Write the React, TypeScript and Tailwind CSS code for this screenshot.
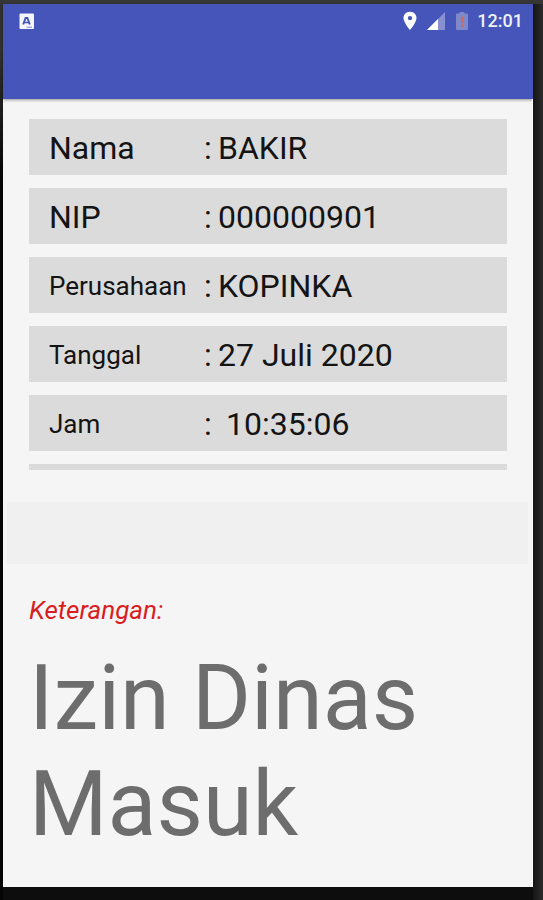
type Row = {
  label: string;
  value: string;
  small?: boolean;
  indent?: boolean;
};

const ROWS: Row[] = [
  { label: "Nama", value: "BAKIR" },
  { label: "NIP", value: "000000901" },
  { label: "Perusahaan", value: "KOPINKA", small: true },
  { label: "Tanggal", value: "27 Juli 2020", small: true },
  { label: "Jam", value: "10:35:06", small: true, indent: true },
];

function AppBadgeIcon() {
  return (
    <svg width="16" height="17" viewBox="0 0 16 17" aria-hidden="true">
      <rect x="0.5" y="0.5" width="14.5" height="15.5" rx="1" fill="#f6f7fc" />
      <path d="M4.2 11.5 6.600 5h1.8l2.4 6.500" fill="none" stroke="#4355b9" strokeWidth="1.9" />
      <path d="M5.300 9.500h4.600" stroke="#4355b9" strokeWidth="1.5" />
      <path d="M7.500 14.200h5.500" stroke="#8f9ad6" strokeWidth="1.2" />
    </svg>
  );
}

function LocationIcon() {
  return (
    <svg width="14" height="20" viewBox="0 0 14 20" aria-hidden="true">
      <path
        fillRule="evenodd"
        fill="#ffffff"
        d="M7 .8C3.300.8.500 3.600.500 7c0 4.600 6.500 12 6.500 12S13.500 11.600 13.500 7C13.500 3.600 10.700.8 7 .8Zm0 4.100a2.200 2.200 0 1 1 0 4.400 2.200 2.200 0 0 1 0-4.400Z"
      />
    </svg>
  );
}

function SignalIcon() {
  return (
    <svg width="18" height="18" viewBox="0 0 18 18" aria-hidden="true">
      <path d="M18 0v18H0Z" fill="#8791d1" />
      <path d="M11 7v11H0Z" fill="#ffffff" />
    </svg>
  );
}

function BatteryIcon() {
  return (
    <svg width="12" height="18" viewBox="0 0 12 18" aria-hidden="true">
      <path d="M3.500 0h5v1.500H11c.6 0 1 .4 1 1V17c0 .6-.4 1-1 1H1c-.6 0-1-.4-1-1V2.500c0-.6.4-1 1-1h2.500Z" fill="#7f88c8" />
      <path d="M5 4.500h2.500v6.500H5ZM5 12.500h2.500V15H5Z" fill="#d0675f" />
    </svg>
  );
}

export default function App() {
  return (
    // Khung thiết bị
    <div className="min-h-screen flex flex-col bg-[#363636] pt-1 font-[Roboto,sans-serif]">
      <div className="flex-1 flex">
        {/* Viền trái */}
        <div className="w-[3px] bg-linear-to-b from-[#333333] from-5% to-[#050505] to-20%" />

        <div className="flex-1 min-w-0 flex flex-col">
          <div className="flex-1 flex flex-col bg-[#f5f5f5]">
            {/* Status bar + toolbar */}
            <header className="h-[95px] bg-[#4555b9] shadow-[0_1px_3px_rgba(0,0,0,0.4)]">
              <div className="flex items-center justify-between h-[34px] pl-4 pr-[10px]">
                <AppBadgeIcon />
                <div className="flex items-center">
                  <LocationIcon />
                  <span className="ml-[10px]">
                    <SignalIcon />
                  </span>
                  <span className="ml-[11px]">
                    <BatteryIcon />
                  </span>
                  <time className="ml-[9px] text-[18px] leading-6 font-medium text-[#eef0fa]">12:01</time>
                </div>
              </div>
            </header>

            <main className="flex-1 pt-5 border-r border-white">
              <dl className="flex flex-col gap-[13px] pl-[26px] pr-[25px] text-[#141414]">
                {ROWS.map((row) => (
                  <div key={row.label} className="flex items-center h-14 pl-5 pt-[2px] bg-[#dbdbdb]">
                    <dt className={`w-[155px] shrink-0 ${row.small ? "text-[26px]" : "text-[32px]"}`}>{row.label}</dt>
                    <dd className="flex text-[32px] leading-10">
                      <span className="w-[14px]">:</span>
                      <span className={row.indent ? "pl-2" : ""}>{row.value}</span>
                    </dd>
                  </div>
                ))}
                {/* Hàng trống */}
                <div className="h-[6px] bg-[#dbdbdb]" />
              </dl>

              <div className="mt-8 mx-1 h-[62px] bg-[#f0f0f0]" />

              <section className="px-[26px] pt-7">
                <h2 className="text-[26px] leading-9 italic text-[#d81e22]">Keterangan:</h2>
                <p className="mt-[18px] text-[90px] leading-[106px] text-[#6d6d6d]">Izin Dinas Masuk</p>
              </section>
            </main>
          </div>
          <div className="h-[13px] bg-[#0d0d0d]" />
        </div>

        {/* Viền phải */}
        <div className="w-[10px] bg-linear-to-r from-[#161616] to-[#2b2b2b]" />
      </div>
    </div>
  );
}
